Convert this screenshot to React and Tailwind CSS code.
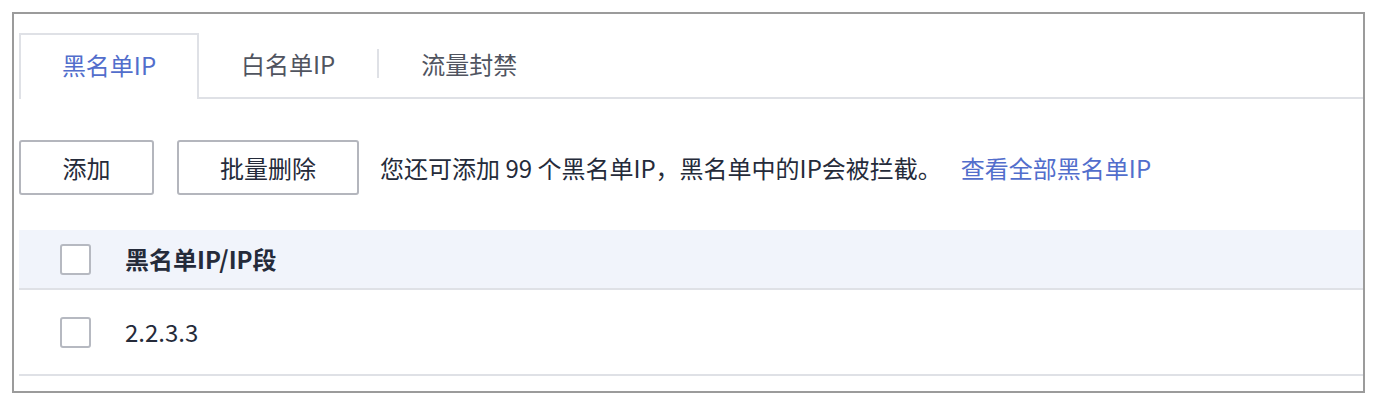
import React from 'react'

const font = { fontFamily: '"Noto Sans CJK SC", "Noto Sans", sans-serif' }

function Checkbox() {
  return <div className="w-[31px] h-[31px] border-2 border-[#b6b9c1] rounded-[3px] bg-white shrink-0" />
}

export default function App() {
  const tabs = ['白名单IP', '流量封禁']

  return (
    <div className="w-[1379px] h-[407px] bg-white pt-[12px] pl-[12px]" style={font}>
      <div className="w-[1353px] h-[381px] border-2 border-[#9b9b9b] pl-[5px] pt-[19px] flex flex-col">
        {/* Tabs */}
        <div className="flex h-[66px]">
          <div className="w-[180px] border-2 border-b-0 border-[#dfe1e6] flex items-center justify-center text-[24px] text-[#526ecc] pb-[4px]">
            黑名单IP
          </div>
          <div className="flex-1 flex items-center border-b-2 border-[#dfe1e6] pb-[3px]">
            {tabs.map((t, i) => (
              <React.Fragment key={t}>
                {i > 0 && <div className="w-[2px] h-[29px] bg-[#dfe1e6]" />}
                <div className="px-[42px] text-[24px] text-[#50545f]">{t}</div>
              </React.Fragment>
            ))}
          </div>
        </div>

        {/* Toolbar */}
        <div className="flex items-center mt-[41px] h-[55px]">
          <button className="w-[135px] h-[55px] border-2 border-[#b4b6bd] rounded-[3px] text-[24px] text-[#252b3a]">添加</button>
          <button className="w-[182px] h-[55px] ml-[23px] border-2 border-[#b4b6bd] rounded-[3px] text-[24px] text-[#252b3a]">批量删除</button>
          <span className="ml-[21px] text-[24px] text-[#252b3a]">
            您还可添加 99 个黑名单IP，黑名单中的IP会被拦截。
          </span>
          <a className="ml-[19px] text-[24px] text-[#526ecc]">查看全部黑名单IP</a>
        </div>

        {/* Table */}
        <div className="mt-[35px]">
          <div className="h-[60px] bg-[#f1f4fb] border-b-2 border-[#dfe1e6] flex items-center">
            <div className="ml-[41px]"><Checkbox /></div>
            <div className="ml-[34px] text-[24px] font-bold text-[#252b3a]">黑名单IP/IP段</div>
          </div>
          <div className="h-[86px] border-b-2 border-[#dfe1e6] flex items-center">
            <div className="ml-[41px]"><Checkbox /></div>
            <div className="ml-[34px] text-[24px] text-[#252b3a]">2.2.3.3</div>
          </div>
        </div>
      </div>
    </div>
  )
}
